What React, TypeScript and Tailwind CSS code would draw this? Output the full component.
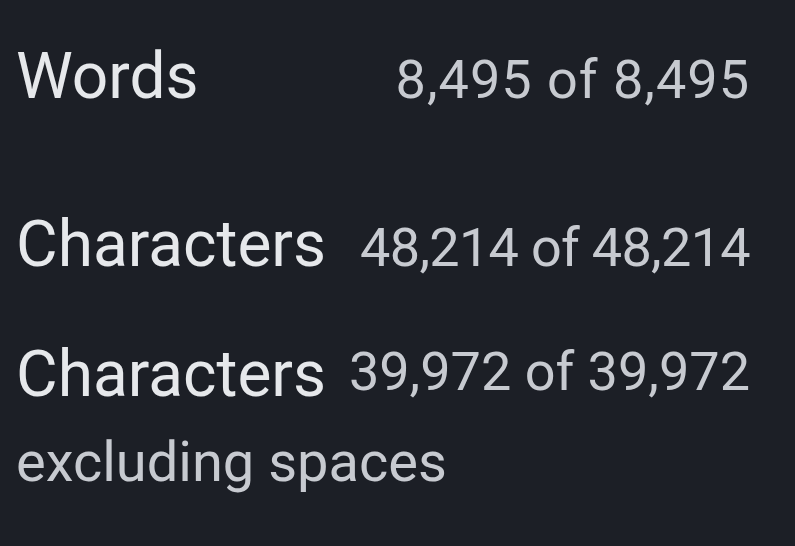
export default function App() {
  const label = 'text-[64px] leading-[74px] text-[#e6e8eb] whitespace-nowrap'
  const value = 'text-[54px] leading-[62px] text-[#c7cad0] whitespace-nowrap'

  return (
    <div
      className="w-[795px] h-[546px] overflow-hidden bg-[#1c1f26] pl-[16px] pr-[45px] pt-[40px]"
      style={{ fontFamily: 'Roboto, "Noto Sans", sans-serif' }}
    >
      <div className="flex items-baseline justify-between">
        <span className={label}>Words</span>
        <span className={value + ' tracking-[1px]'}>8,495 of 8,495</span>
      </div>

      <div className="flex items-baseline justify-between mt-[94px]">
        <span className={label}>Characters</span>
        <span className={value + ' tracking-[-0.7px]'}>48,214 of 48,214</span>
      </div>

      <div className="flex items-start justify-between mt-[56px]">
        <span className={label}>Characters</span>
        <span className={value + ' mt-[3px]'}>39,972 of 39,972</span>
      </div>
      <div className="text-[56px] leading-[62px] text-[#c7cad0] whitespace-nowrap mt-[19px]">
        excluding spaces
      </div>
    </div>
  )
}
